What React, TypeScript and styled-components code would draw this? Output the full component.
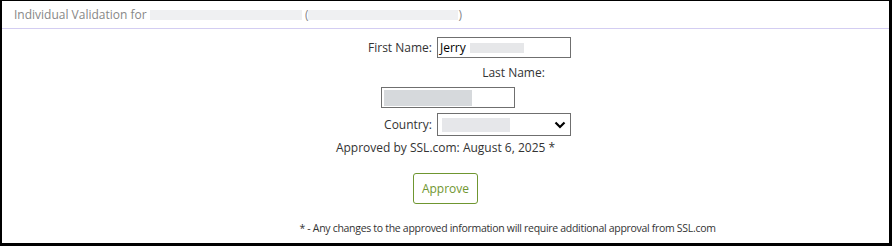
import styled, { createGlobalStyle } from "styled-components";

const GlobalStyle = createGlobalStyle`
  html, body {
    margin: 0;
    padding: 0;
    background: #fff;
  }
  body {
    font-family: "Open Sans", "Liberation Sans", Arial, sans-serif;
    font-size: 12px;
    color: #333;
  }
`;

const Frame = styled.div`
  box-sizing: border-box;
  width: 892px;
  height: 246px;
  border-style: solid;
  border-color: #000;
  border-width: 1px 3px 3px 2px;
  display: flex;
  flex-direction: column;
  overflow: hidden;
`;

const Header = styled.div`
  box-sizing: border-box;
  height: 28px;
  flex: none;
  border-bottom: 1px solid #d3cdf2;
  display: flex;
  align-items: center;
  padding-left: 12px;
  color: #878787;
  font-size: 12px;
  white-space: nowrap;
`;

const Redacted = styled.span<{ w: number; h?: number; tone?: string }>`
  display: inline-block;
  width: ${(p) => p.w}px;
  height: ${(p) => p.h ?? 10}px;
  background: ${(p) => p.tone ?? "#eff0f2"};
  vertical-align: middle;
`;

const Body = styled.div`
  flex: 1;
  display: flex;
  flex-direction: column;
  align-items: center;
  padding-top: 8px;
`;

const Row = styled.div<{ shift?: number; mt?: number }>`
  display: flex;
  align-items: center;
  gap: 5px;
  margin-left: ${(p) => (p.shift ?? 0) * 2}px;
  margin-top: ${(p) => p.mt ?? 0}px;
  white-space: nowrap;
`;

const Label = styled.span`
  color: #333;
  font-size: 12px;
`;

const TextBox = styled.div`
  box-sizing: border-box;
  width: 134px;
  height: 21px;
  border: 1px solid #6f6f6f;
  display: flex;
  align-items: center;
  gap: 4px;
  padding-left: 2px;
  color: #000;
  font-size: 12px;
`;

const SelectBox = styled(TextBox)`
  height: 23px;
  padding: 0 4px 0 4px;
  justify-content: space-between;
`;

const ApproveButton = styled.button`
  box-sizing: border-box;
  width: 65px;
  height: 31px;
  background: #fff;
  border: 1px solid #6f9630;
  border-radius: 3px;
  color: #6f9630;
  font-family: inherit;
  font-size: 12px;
  padding: 0;
`;

const Note = styled.div<{ shift?: number; mt?: number; small?: boolean }>`
  margin-left: ${(p) => (p.shift ?? 0) * 2}px;
  margin-top: ${(p) => p.mt ?? 0}px;
  color: #333;
  font-size: ${(p) => (p.small ? "10.5px" : "12px")};
  letter-spacing: ${(p) => (p.small ? "-0.3px" : "normal")};
  white-space: nowrap;
`;

const Chevron = () => (
  <svg width="12" height="8" viewBox="0 0 12 8">
    <path d="M1.5 1.5 L6 6 L10.5 1.5" fill="none" stroke="#000" strokeWidth="2.2" />
  </svg>
);

export default function App() {
  return (
    <>
      <GlobalStyle />
      <Frame>
        <Header>
          Individual Validation for&nbsp;
          <Redacted w={152} />
          &nbsp;(
          <Redacted w={150} />
          )
        </Header>
        <Body>
          <Row shift={24}>
            <Label>First Name:</Label>
            <TextBox>
              Jerry
              <Redacted w={54} tone="#e6e7e9" />
            </TextBox>
          </Row>
          <Row shift={68} mt={6}>
            <Label>Last Name:</Label>
          </Row>
          <Row shift={2} mt={6}>
            <TextBox>
              <Redacted w={88} h={16} tone="#d6d9dc" />
            </TextBox>
          </Row>
          <Row shift={32} mt={5}>
            <Label>Country:</Label>
            <SelectBox>
              <Redacted w={68} h={14} tone="#e6e7ea" />
              <Chevron />
            </SelectBox>
          </Row>
          <Note mt={3}>Approved by SSL.com: August 6, 2025 *</Note>
          <Row mt={17}>
            <ApproveButton>Approve</ApproveButton>
          </Row>
          <Note small shift={62} mt={17}>
            * - Any changes to the approved information will require additional approval from SSL.com
          </Note>
        </Body>
      </Frame>
    </>
  );
}
